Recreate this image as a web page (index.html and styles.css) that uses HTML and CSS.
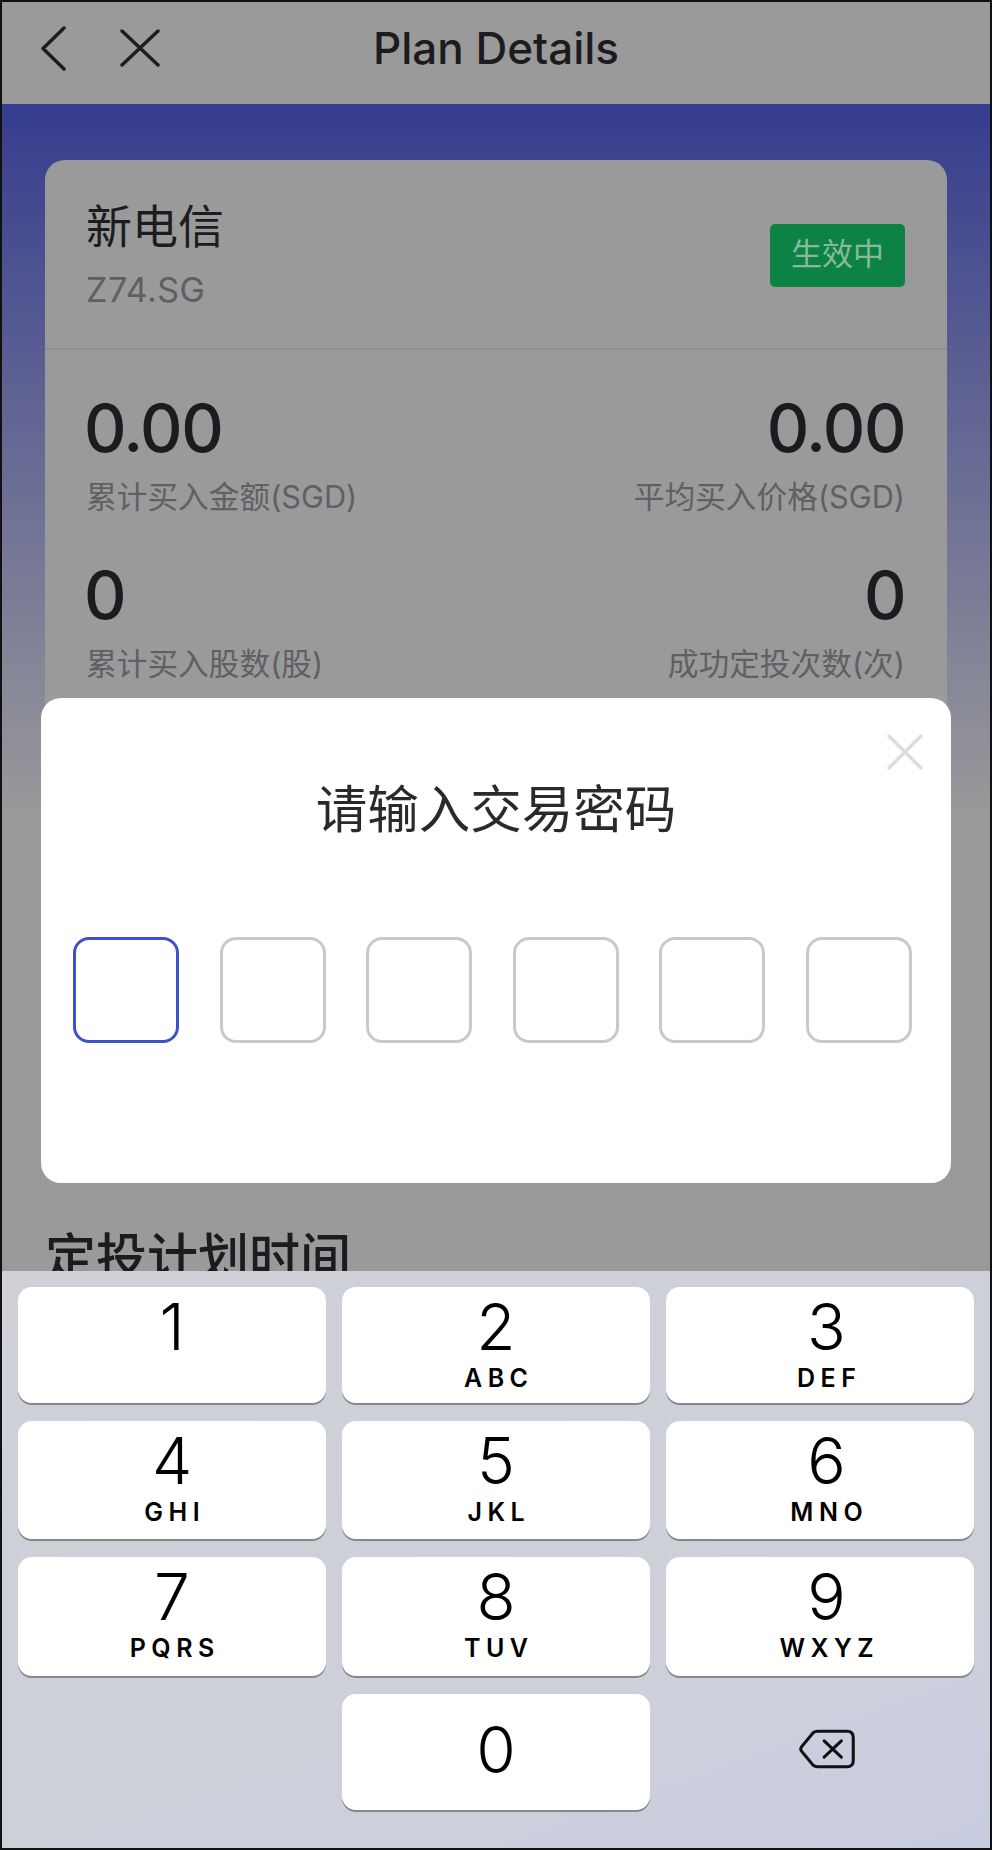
FILE: index.html
```html
<!DOCTYPE html>
<html lang="zh-CN">
<head>
  <meta charset="UTF-8">
  <meta name="viewport" content="width=device-width, initial-scale=1.0">
  <title>Plan Details</title>
  <link rel="stylesheet" href="styles.css">
</head>
<body>
  <div class="phone">
    <header class="top-bar">
      <div class="top-icons">
        <svg class="icon-back" width="26" height="45" viewBox="0 0 26 45"><path d="M24 2 L3 22.5 L24 43" fill="none" stroke="#1c1c20" stroke-width="3.4" stroke-linecap="round" stroke-linejoin="round"/></svg>
        <svg class="icon-close" width="40" height="38" viewBox="0 0 40 38"><path d="M2 2 L38 36 M38 2 L2 36" fill="none" stroke="#1c1c20" stroke-width="3.4" stroke-linecap="round"/></svg>
      </div>
      <h1>Plan Details</h1>
    </header>

    <main class="content">
      <section class="card">
        <div class="card-head">
          <div>
            <div class="stock-name">新电信</div>
            <div class="stock-code">Z74.SG</div>
          </div>
          <span class="badge">生效中</span>
        </div>
        <div class="stats">
          <div class="stat">
            <div class="stat-value">0.00</div>
            <div class="stat-label">累计买入金额(SGD)</div>
          </div>
          <div class="stat right">
            <div class="stat-value">0.00</div>
            <div class="stat-label">平均买入价格(SGD)</div>
          </div>
          <div class="stat">
            <div class="stat-value">0</div>
            <div class="stat-label">累计买入股数(股)</div>
          </div>
          <div class="stat right">
            <div class="stat-value">0</div>
            <div class="stat-label">成功定投次数(次)</div>
          </div>
        </div>
      </section>
      <h2 class="section-title">定投计划时间</h2>
    </main>

    <div class="modal">
      <svg class="modal-close" width="36" height="36" viewBox="0 0 36 36"><path d="M2 2 L34 34 M34 2 L2 34" fill="none" stroke="#dcdcdc" stroke-width="3.4" stroke-linecap="round"/></svg>
      <div class="modal-title">请输入交易密码</div>
      <div class="pin-row">
        <div class="pin active"></div>
        <div class="pin"></div>
        <div class="pin"></div>
        <div class="pin"></div>
        <div class="pin"></div>
        <div class="pin"></div>
      </div>
    </div>

    <div class="keyboard">
      <div class="key"><span class="num">1</span></div>
      <div class="key"><span class="num">2</span><span class="letters">ABC</span></div>
      <div class="key"><span class="num">3</span><span class="letters">DEF</span></div>
      <div class="key"><span class="num">4</span><span class="letters">GHI</span></div>
      <div class="key"><span class="num">5</span><span class="letters">JKL</span></div>
      <div class="key"><span class="num">6</span><span class="letters">MNO</span></div>
      <div class="key"><span class="num">7</span><span class="letters">PQRS</span></div>
      <div class="key"><span class="num">8</span><span class="letters">TUV</span></div>
      <div class="key"><span class="num">9</span><span class="letters">WXYZ</span></div>
      <div class="key-blank"></div>
      <div class="key zero"><span class="num">0</span></div>
      <div class="key-delete">
        <svg width="58" height="42" viewBox="0 0 60 44"><path d="M20 3.5 H51 Q57.500 3.500 57.500 10 V34 Q57.500 40.500 51 40.500 H20 Q17.500 40.500 15.500 39 L3.500 24.500 Q1.500 22 3.500 19.500 L15.500 5 Q17.500 3.500 20 3.500 Z" fill="none" stroke="#111" stroke-width="3.2" stroke-linejoin="round"/><path d="M27 13.500 L45 30.500 M45 13.500 L27 30.500" fill="none" stroke="#111" stroke-width="3.2" stroke-linecap="round"/></svg>
      </div>
    </div>
  </div>
</body>
</html>
```

FILE: styles.css
```css
* {
  box-sizing: border-box;
}

body {
  margin: 0;
  font-family: Inter, "Noto Sans CJK SC", sans-serif;
  background-color: #ffffff;
}

.phone {
  position: relative;
  width: 992px;
  height: 1850px;
  border: 2px solid #111111;
  overflow: hidden;
  background-color: #9a9a9a;
}

.top-bar {
  display: grid;
  grid-template-columns: 1fr auto 1fr;
  align-items: center;
  height: 102px;
  padding-bottom: 10px;
  background-color: #9a9a9a;
}

.top-icons {
  display: flex;
  align-items: center;
  gap: 54px;
  padding-left: 38px;
}

.top-bar h1 {
  margin: 0;
  font-size: 44px;
  font-weight: 500;
  color: #1c1c20;
}

.content {
  padding: 56px 43px 0;
  background: linear-gradient(#363c8e 0, #9a9a9a 716px);
}

.card {
  min-height: 1020px;
  border-radius: 20px;
  background-color: #9a9a9a;
}

.card-head {
  display: flex;
  justify-content: space-between;
  align-items: center;
  padding: 36px 42px 38px 41px;
  border-bottom: 2px solid #8f8f8f;
}

.stock-name {
  font-size: 46px;
  line-height: 60px;
  color: #1c1c20;
}

.stock-code {
  margin-top: 14px;
  font-size: 34px;
  line-height: 40px;
  letter-spacing: 0.5px;
  color: #5e5e63;
}

.badge {
  margin-top: 4px;
  width: 135px;
  height: 63px;
  border-radius: 5px;
  background-color: #0c8244;
  color: #88ba9a;
  font-size: 31px;
  line-height: 60px;
  text-align: center;
}

.stats {
  display: grid;
  grid-template-columns: 1fr 1fr;
  row-gap: 38px;
  padding: 38px 42px 0 41px;
}

.stat.right {
  text-align: right;
}

.stat-value {
  margin-left: -2px;
  font-size: 66px;
  font-weight: 500;
  line-height: 80px;
  letter-spacing: -1.5px;
  color: #1c1c20;
}

.stat-label {
  margin-top: 9px;
  font-size: 30.7px;
  line-height: 40px;
  color: #5f5f64;
}

.section-title {
  margin: 48px 0 0;
  font-size: 51px;
  font-weight: 500;
  line-height: 60px;
  color: #1c1c20;
}

/* dialog and keyboard sit over the page */
.modal {
  position: absolute;
  top: 696px;
  left: 39px;
  width: 910px;
  height: 485px;
  padding-top: 76px;
  border-radius: 20px;
  background-color: #ffffff;
}

.modal-close {
  position: absolute;
  top: 36px;
  right: 28px;
}

.modal-title {
  font-size: 51.5px;
  line-height: 70px;
  text-align: center;
  color: #2a2a2e;
}

.pin-row {
  display: flex;
  justify-content: space-between;
  margin-top: 93px;
  padding: 0 39px 0 32px;
}

.pin {
  width: 106px;
  height: 106px;
  border: 3px solid #c9c9cc;
  border-radius: 16px;
}

.pin.active {
  border-color: #3f51c8;
}

.keyboard {
  position: absolute;
  left: 0;
  right: 0;
  bottom: 0;
  height: 577px;
  display: grid;
  grid-template-columns: repeat(3, 1fr);
  grid-template-rows: 116px 118px 119px 116px;
  gap: 18px 16px;
  padding: 16px 16px 0 16px;
  background: linear-gradient(160deg, #cfd1d7 0%, #cdd0da 70%, #c8cce0 100%);
}

.key {
  display: flex;
  flex-direction: column;
  align-items: center;
  padding-top: 10px;
  border-radius: 14px;
  background-color: #ffffff;
  box-shadow: 0 2px 0 #87888c;
  color: #000000;
}

/* third column labels sit a little right of the key centre */
.key:nth-child(3n),
.key-delete {
  padding-left: 13px;
}

.key.zero {
  justify-content: center;
  padding-top: 0;
  padding-bottom: 4px;
}

.num {
  font-size: 64px;
  font-weight: 300;
  line-height: 60px;
}

.letters {
  margin-top: 7px;
  padding-left: 5.5px;
  font-size: 25px;
  font-weight: 600;
  line-height: 28px;
  letter-spacing: 5.5px;
}

.key-delete {
  display: flex;
  align-items: center;
  justify-content: center;
  padding-bottom: 6px;
}
```
